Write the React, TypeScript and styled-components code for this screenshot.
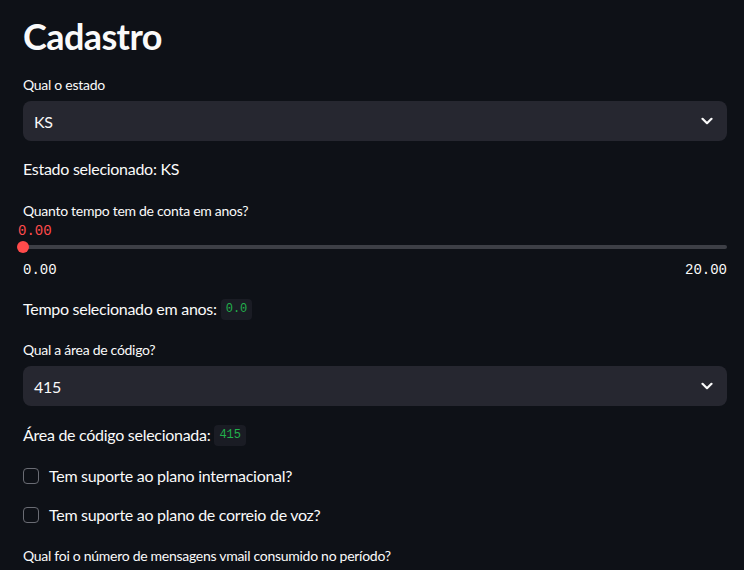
import React from 'react'
import styled, { createGlobalStyle } from 'styled-components'

const Global = createGlobalStyle`
  html, body {
    margin: 0;
    padding: 0;
    background: #0e1117;
  }
  body {
    font-family: Lato, 'Noto Sans', sans-serif;
    color: #fafafa;
    letter-spacing: -0.28px;
  }
`

const Page = styled.main`
  width: 744px;
  height: 570px;
  overflow: hidden;
  box-sizing: border-box;
  padding: 14px 17px 0 23px;
  display: flex;
  flex-direction: column;
`

const Title = styled.h1`
  margin: 0;
  font-size: 36px;
  font-weight: 700;
  line-height: 44px;
  letter-spacing: -0.6px;
`

const Label = styled.div<{ top: number }>`
  margin-top: ${(p) => p.top}px;
  font-size: 14px;
  line-height: 18px;
  height: 18px;
`

const Select = styled.div`
  margin-top: 7px;
  height: 40px;
  border-radius: 8px;
  background: #262730;
  display: flex;
  align-items: center;
  justify-content: space-between;
  padding: 0 14px 0 11px;
  font-size: 16px;
`

const Text = styled.p<{ top: number }>`
  margin: ${(p) => p.top}px 0 0;
  font-size: 16px;
  line-height: 22px;
  display: flex;
  align-items: center;
  gap: 4px;
`

const Code = styled.code`
  font-family: 'Liberation Mono', 'DejaVu Sans Mono', monospace;
  font-size: 12px;
  letter-spacing: 0;
  color: #22b04c;
  background: #1a1c24;
  border-radius: 4px;
  padding: 3px 5px;
  line-height: 15px;
`

const SliderWrap = styled.div`
  display: flex;
  flex-direction: column;
  font-family: 'Liberation Mono', 'DejaVu Sans Mono', monospace;
  font-size: 14px;
  letter-spacing: 0;
`

const SliderValue = styled.div`
  color: #ff4b4b;
  margin-left: -5px;
  margin-top: 3px;
  line-height: 16px;
`

const Track = styled.div`
  margin-top: 6px;
  height: 4px;
  background: #3d3f46;
  border-radius: 2px;
  position: relative;
`

const Thumb = styled.span`
  position: absolute;
  left: -6px;
  top: -4px;
  width: 12px;
  height: 12px;
  border-radius: 50%;
  background: #ff4b4b;
`

const Ticks = styled.div`
  margin-top: 13px;
  display: flex;
  justify-content: space-between;
  line-height: 16px;
`

const CheckRow = styled.label<{ top: number }>`
  margin-top: ${(p) => p.top}px;
  display: flex;
  align-items: center;
  gap: 10px;
  font-size: 16px;
  line-height: 22px;
`

const Box = styled.span`
  width: 16px;
  height: 16px;
  box-sizing: border-box;
  border: 1px solid #6a6c74;
  border-radius: 4px;
  flex-shrink: 0;
`

const Chevron = () => (
  <svg width="12" height="8" viewBox="0 0 12 8" fill="none" stroke="#fafafa" strokeWidth="2.2" strokeLinecap="round" strokeLinejoin="round">
    <path d="M1.5 1.8L6 6.2l4.5-4.4" />
  </svg>
)

export default function App() {
  return (
    <Page>
      <Global />
      <Title>Cadastro</Title>
      <Label top={18}>Qual o estado</Label>
      <Select>
        <span>KS</span>
        <Chevron />
      </Select>
      <Text top={17}>Estado selecionado: KS</Text>
      <Label top={22}>Quanto tempo tem de conta em anos?</Label>
      <SliderWrap>
        <SliderValue>0.00</SliderValue>
        <Track>
          <Thumb />
        </Track>
        <Ticks>
          <span>0.00</span>
          <span>20.00</span>
        </Ticks>
      </SliderWrap>
      <Text top={20}>
        Tempo selecionado em anos: <Code>0.0</Code>
      </Text>
      <Label top={21}>Qual a área de código?</Label>
      <Select>
        <span>415</span>
        <Chevron />
      </Select>
      <Text top={18}>
        Área de código selecionada: <Code>415</Code>
      </Text>
      <CheckRow top={19}>
        <Box />
        Tem suporte ao plano internacional?
      </CheckRow>
      <CheckRow top={17}>
        <Box />
        Tem suporte ao plano de correio de voz?
      </CheckRow>
      <Label top={21}>Qual foi o número de mensagens vmail consumido no período?</Label>
    </Page>
  )
}
